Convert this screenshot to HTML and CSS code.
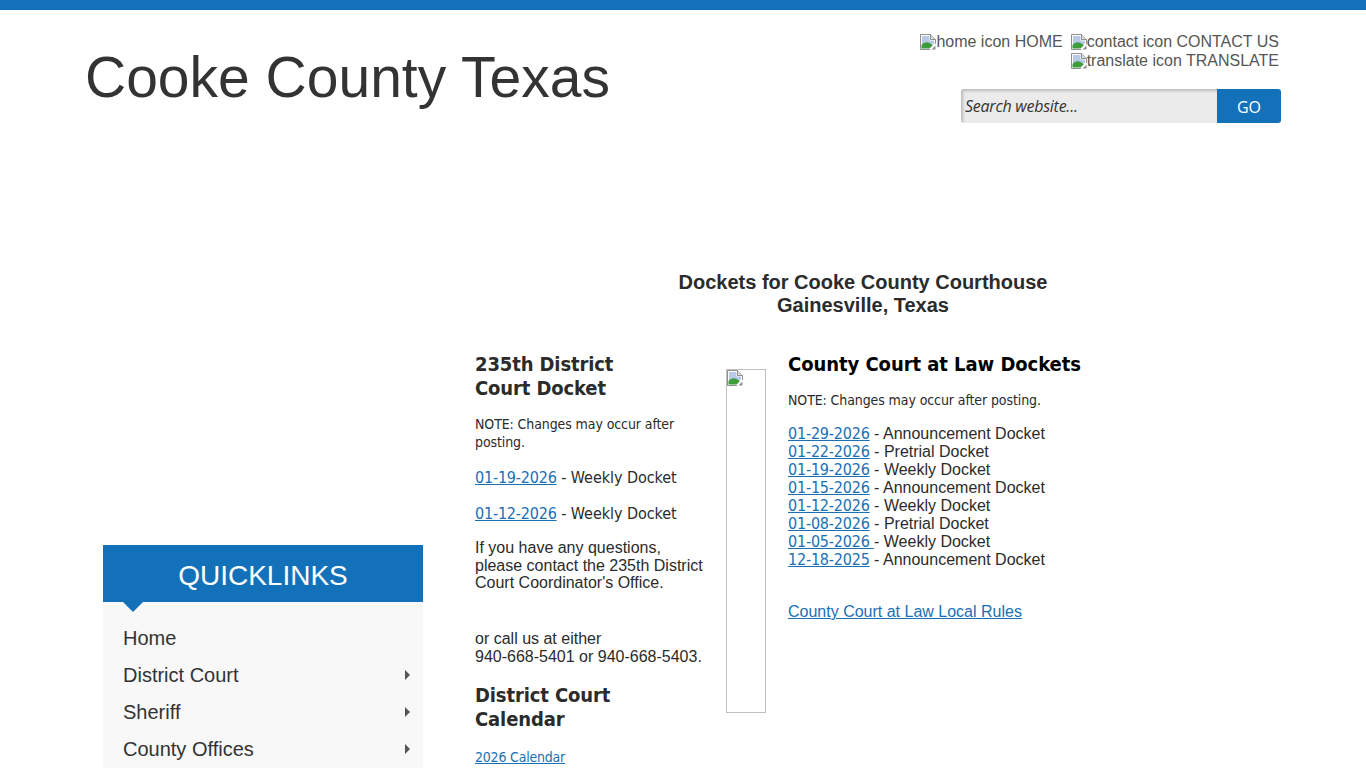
FILE: index.html
```html
<!DOCTYPE html>
<html lang="en">
<head>
<meta charset="utf-8">
<title>Cooke County Texas</title>
<link rel="stylesheet" href="styles.css">
</head>
<body>
<svg class="sprite" width="0" height="0" aria-hidden="true">
  <symbol id="broken" viewBox="0 0 16 16">
    <path d="M.5.5H10.5L15.5 5.5V15.5H.5Z" fill="#fff" stroke="#8f8f8f"/>
    <path d="M10.5.5V5.5H15.5" fill="#dcdcdc" stroke="#8f8f8f"/>
    <path d="M2 2H9.5V6.5H14V10H2Z" fill="#b7c9e4"/>
    <path d="M1.5 14.5V11C4 8 7 7.5 9.5 9L13 11L9.5 14.5Z" fill="#3f9c3c"/>
    <path d="M9.5 16L16 9.5V16Z" fill="#fff"/>
    <path d="M11.5 15.5L15.5 11.5V15.5Z" fill="#8f8f8f"/>
  </symbol>
</svg>
<div class="topbar"></div>
<header class="header">
  <h1 class="site-title">Cooke County Texas</h1>
  <div class="tools">
    <nav class="toplinks">
      <div class="toplink-row">
        <a class="toplink"><svg class="broken"><use href="#broken"/></svg>home icon HOME</a>
        <a class="toplink"><svg class="broken"><use href="#broken"/></svg>contact icon CONTACT US</a>
      </div>
      <div class="toplink-row">
        <a class="toplink"><svg class="broken"><use href="#broken"/></svg>translate icon TRANSLATE</a>
      </div>
    </nav>
    <form class="search">
      <div class="search-input">Search website...</div>
      <div class="search-go">GO</div>
    </form>
  </div>
</header>
<div class="page">
  <aside class="sidebar">
    <div class="ql-head">QUICKLINKS</div>
    <ul class="ql-list">
      <li class="ql-item">Home</li>
      <li class="ql-item has-sub">District Court</li>
      <li class="ql-item has-sub">Sheriff</li>
      <li class="ql-item has-sub">County Offices</li>
    </ul>
  </aside>
  <main class="content">
    <h2 class="page-title">Dockets for Cooke County Courthouse<br>Gainesville, Texas</h2>
    <div class="columns">
      <section class="col-left">
        <h3 class="doc-head">235th District<br>Court Docket</h3>
        <p class="note">NOTE: Changes may occur after posting.</p>
        <p class="docket"><a class="date" href="#">01-19-2026</a> - Weekly Docket</p>
        <p class="docket"><a class="date" href="#">01-12-2026</a> - Weekly Docket</p>
        <p class="plain">If you have any questions,<br>please contact the 235th District Court Coordinator's Office.</p>
        <p class="plain call">or call us at either<br>940-668-5401 or 940-668-5403.</p>
        <h3 class="doc-head cal">District Court<br>Calendar</h3>
        <p class="small"><a class="date" href="#">2026 Calendar</a></p>
      </section>
      <div class="divider-wrap"><div class="divider"><svg class="broken"><use href="#broken"/></svg></div></div>
      <section class="col-right">
        <h3 class="doc-head black">County Court at Law Dockets</h3>
        <p class="note">NOTE: Changes may occur after posting.</p>
        <ul class="docket-list">
          <li><a class="date" href="#">01-29-2026</a> - Announcement Docket</li>
          <li><a class="date" href="#">01-22-2026</a> - Pretrial Docket</li>
          <li><a class="date" href="#">01-19-2026</a> - Weekly Docket</li>
          <li><a class="date" href="#">01-15-2026</a> - Announcement Docket</li>
          <li><a class="date" href="#">01-12-2026</a> - Weekly Docket</li>
          <li><a class="date" href="#">01-08-2026</a> - Pretrial Docket</li>
          <li><a class="date" href="#">01-05-2026 </a> - Weekly Docket</li>
          <li><a class="date" href="#">12-18-2025</a> - Announcement Docket</li>
        </ul>
        <p class="rules"><a class="link" href="#">County Court at Law Local Rules</a></p>
      </section>
    </div>
  </main>
</div>
</body>
</html>
```
FILE: styles.css
```css
html, body { margin: 0; padding: 0; background: #fff; }
body { height: 768px; overflow: hidden; font-family: "Liberation Sans", Arial, sans-serif; color: #2b2b2b; }
.sprite { display: block; height: 0; }
.topbar { height: 10px; background: #1371b9; }
.header { display: flex; justify-content: space-between; padding: 0 85px; height: 135px; }
.site-title { margin: 33px 0 0; font-size: 57px; line-height: 69px; font-weight: 400; color: #333; }
.tools { display: flex; flex-direction: column; align-items: flex-end; padding-top: 22px; }
.toplinks { font-size: 16px; line-height: 19px; color: #555; margin-right: 2px; }
.toplink-row { display: flex; justify-content: flex-end; gap: 8px; }
.toplink { display: inline-flex; align-items: center; color: #555; }
.broken { display: block; width: 16px; height: 16px; flex: none; }
.search { display: flex; margin-top: 19px; height: 34px; width: 320px; border-radius: 3px; overflow: hidden; }
.search-input { flex: 1; background: #ebebeb; box-shadow: inset 2px 2px 3px #bbb; font: italic 16px/34px "Open Sans", sans-serif; color: #333; padding-left: 4px; letter-spacing: -0.25px; }
.search-go { width: 64px; background: #1371b9; color: #fff; text-align: center; font: 16px/36px "Open Sans", sans-serif; }
.page { display: flex; padding-left: 103px; }
.sidebar { width: 320px; margin-top: 400px; flex: none; }
.ql-head { position: relative; height: 57px; background: #1371b9; color: #fff; font-size: 28px; line-height: 61px; text-align: center; }
.ql-head::after { content: ""; position: absolute; left: 20px; top: 57px; border: 10px solid transparent; border-top-color: #1371b9; border-bottom: 0; }
.ql-list { list-style: none; margin: 0; padding: 18px 0 0; background: #f8f8f8; }
.ql-item { position: relative; height: 37px; padding-left: 20px; font-size: 20px; line-height: 37px; color: #333; }
.has-sub::after { content: ""; position: absolute; right: 13px; top: 13px; border: 5px solid transparent; border-left: 5px solid #555; border-right: 0; }
.content { flex: 1; padding-left: 52px; }
.page-title { margin: 126px 0 0; width: 776px; font-size: 20px; line-height: 23px; font-weight: 700; text-align: center; color: #2b2b2b; }
.columns { display: flex; margin-top: 35px; font-family: "DejaVu Sans", Tahoma, sans-serif; font-stretch: condensed; }
.col-left { width: 230px; flex: none; }
.divider-wrap { width: 40px; margin-left: 21px; padding-top: 17px; flex: none; }
.divider { box-sizing: border-box; width: 40px; height: 344px; border: 1px solid #c0c0c0; }
.col-right { margin-left: 22px; }
.doc-head { margin: 0; font-size: 20px; line-height: 24px; font-weight: 700; letter-spacing: -0.12px; }
.black { color: #000; letter-spacing: -0.05px; }
.note { margin: 15px 0 0; font-size: 14px; line-height: 18px; letter-spacing: -0.1px; }
.docket { margin: 17px 0 0; font-size: 16px; line-height: 19px; letter-spacing: -0.05px; }
.plain { margin: 16px 0 0; font: 16px/17.7px "Liberation Sans", Arial, sans-serif; }
.call { margin-top: 38px; line-height: 18px; }
.cal { margin-top: 17px; }
.small { margin: 17px 0 0; font-size: 14px; line-height: 18px; }
.date { color: #1a6fb5; text-decoration: underline; letter-spacing: -0.2px; }
.link { color: #1a6fb5; text-decoration: underline; }
.docket-list { list-style: none; margin: 16px 0 0; padding: 0; font-size: 16px; line-height: 18px; }
.docket-list, .rules { font-family: "Liberation Sans", Arial, sans-serif; }
.docket-list .date { font-family: "DejaVu Sans", Tahoma, sans-serif; }
.rules { margin: 34px 0 0; font-size: 16px; line-height: 18px; }
```
